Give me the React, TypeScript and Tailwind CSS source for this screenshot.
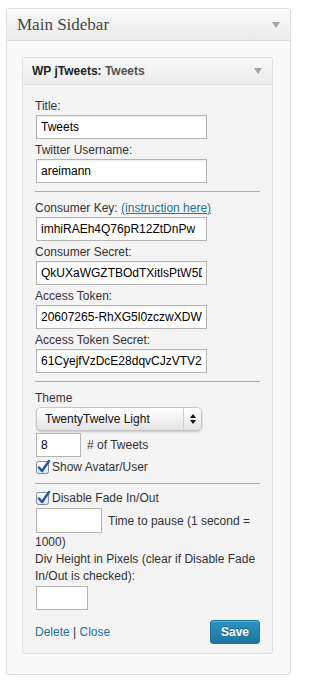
import React from "react";

const sans = { fontFamily: '"Liberation Sans", Arial, Helvetica, sans-serif' };

function Caret() {
  return (
    <svg width="8" height="6" viewBox="0 0 8 6" className="shrink-0">
      <path d="M0 0 H8 L4 6 Z" fill="#a3a3a3" />
    </svg>
  );
}

function Checked() {
  return (
    <svg width="15" height="15" viewBox="0 0 15 15" className="shrink-0 overflow-visible">
      <defs>
        <linearGradient id="cb" x1="0" y1="0" x2="0" y2="1">
          <stop offset="0" stopColor="#ffffff" />
          <stop offset="1" stopColor="#dfe6ef" />
        </linearGradient>
      </defs>
      <rect x="0.5" y="1.5" width="12" height="12" rx="2" fill="url(#cb)" stroke="#7f8a99" />
      <path
        d="M3 7.5 L6 11 L13 1"
        fill="none"
        stroke="#1e56a8"
        strokeWidth="2.4"
        strokeLinecap="round"
        strokeLinejoin="round"
      />
    </svg>
  );
}

function Field({ label, value }: { label: React.ReactNode; value: string }) {
  return (
    <div className="mb-[2px]">
      <div className="leading-[18px]">{label}</div>
      <input
        readOnly
        value={value}
        className="mx-[1px] block h-[24px] w-[171px] border border-[#b4b4b4] bg-white px-[4px] text-[12px] text-black shadow-[inset_0_1px_2px_rgba(0,0,0,0.07)] outline-none"
        style={sans}
      />
    </div>
  );
}

export default function App() {
  return (
    <div className="min-h-screen bg-white pl-[6px] pt-[8px]" style={sans}>
      <div className="w-[285px] rounded-[3px] border border-[#dfdfdf] bg-[#f9f9f9]">
        <div className="flex h-[32px] items-center justify-between border-b border-[#dfdfdf] bg-gradient-to-b from-[#f9f9f9] to-[#ececec] px-[10px]">
          <span
            className="text-[17px] leading-none text-[#464646]"
            style={{ fontFamily: '"Liberation Serif", Georgia, serif' }}
          >
            Main Sidebar
          </span>
          <Caret />
        </div>

        <div className="pl-[15px] pt-[16px] pb-[20px]">
          <div className="w-[251px] rounded-[3px] border border-[#dfdfdf] bg-[#f4f4f4] text-[12px] text-[#333]">
            <div className="flex h-[27px] items-center justify-between border-b border-[#dfdfdf] bg-gradient-to-b from-[#f9f9f9] to-[#ececec] pl-[9px] pr-[10px]">
              <span className="text-[12px] font-bold text-[#222]">
                WP jTweets: <span className="text-[#555]">Tweets</span>
              </span>
              <Caret />
            </div>

            <div className="px-[12px] pt-[12px] pb-[9px]">
              <Field label="Title:" value="Tweets" />
              <Field label="Twitter Username:" value="areimann" />
              <div className="mt-[8px] mb-[7px] h-px w-full bg-[#a9a9a9]" />
              <Field
                label={
                  <>
                    Consumer Key: <span className="text-[#21759b] underline">(instruction here)</span>
                  </>
                }
                value="imhiRAEh4Q76pR12ZtDnPw"
              />
              <Field label="Consumer Secret:" value="QkUXaWGZTBOdTXitlsPtW5DmQnR" />
              <Field label="Access Token:" value="20607265-RhXG5l0zczwXDWkP2sA" />
              <Field label="Access Token Secret:" value="61CyejfVzDcE28dqvCJzVTV2abq" />
              <div className="mt-[8px] mb-[7px] h-px w-full bg-[#a9a9a9]" />

              <div className="leading-[18px]">Theme</div>
              <div className="mx-[1px] flex h-[24px] w-[166px] items-center rounded-[5px] border border-[#c6c6c6] bg-gradient-to-b from-[#ffffff] via-[#f3f3f3] to-[#e2e2e2] shadow-[0_1px_2px_rgba(0,0,0,0.2)]">
                <span className="flex-1 pl-[8px] text-[12px] text-[#111]">TwentyTwelve Light</span>
                <div className="flex h-full w-[18px] items-center justify-center border-l border-[#d0d0d0]">
                  <svg width="6" height="10" viewBox="0 0 6 10">
                    <path d="M0 4 L3 0 L6 4 Z M0 6 L3 10 L6 6 Z" fill="#111" />
                  </svg>
                </div>
              </div>

              <div className="mt-[2px] flex items-center gap-[5px]">
                <input
                  readOnly
                  value="8"
                  className="mx-[1px] h-[24px] w-[45px] border border-[#b4b4b4] bg-white px-[4px] text-[12px] text-black outline-none"
                  style={sans}
                />
                <span>#&nbsp;of Tweets</span>
              </div>

              <div className="mt-[1px] flex h-[18px] items-center gap-[1px] pl-[1px]">
                <Checked />
                <span>Show Avatar/User</span>
              </div>

              <div className="mt-[7px] mb-[5px] h-px w-full bg-[#a9a9a9]" />

              <div className="flex h-[18px] items-center gap-[1px] pl-[1px]">
                <Checked />
                <span>Disable Fade In/Out</span>
              </div>

              <div className="mt-[1px] flex items-center gap-[5px]">
                <input
                  readOnly
                  value=""
                  className="mx-[1px] h-[25px] w-[66px] border border-[#b4b4b4] bg-white outline-none"
                />
                <span>Time to pause (1 second =</span>
              </div>
              <div className="leading-[18px]">1000)</div>

              <div className="leading-[17px]">
                Div Height in Pixels (clear if Disable Fade In/Out is checked):
              </div>
              <input
                readOnly
                value=""
                className="mx-[1px] mt-[1px] block h-[24px] w-[52px] border border-[#b4b4b4] bg-white outline-none"
              />

              <div className="mt-[10px] flex items-center justify-between">
                <span className="text-[12px]">
                  <span className="text-[#21759b]">Delete</span>
                  <span className="text-[#333]"> | </span>
                  <span className="text-[#21759b]">Close</span>
                </span>
                <button className="h-[24px] w-[50px] rounded-[3px] border border-[#21759b] bg-gradient-to-b from-[#2a95c5] to-[#21759b] text-[12px] font-bold text-white shadow-[inset_0_1px_0_rgba(120,200,230,0.5)] [text-shadow:0_-1px_0_rgba(0,0,0,0.3)]">
                  Save
                </button>
              </div>
            </div>
          </div>
        </div>
      </div>
    </div>
  );
}
